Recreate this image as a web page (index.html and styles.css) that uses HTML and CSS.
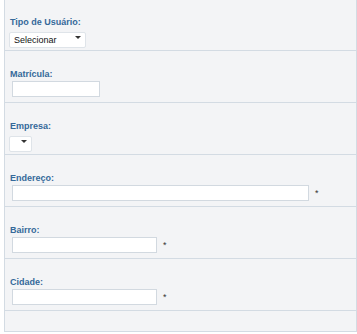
FILE: index.html
```html
<!DOCTYPE html>
<html lang="pt-BR">
<head>
    <meta charset="UTF-8">
    <meta name="viewport" content="width=device-width, initial-scale=1.0">
    <title>Cadastro de usuário</title>
    <link rel="stylesheet" href="styles.css">
</head>
<body>

    <form class="form-box">
        <div class="form-row first">
            <label for="tipo">Tipo de Usuário:</label>
            <span class="select-wrap tipo">
                <select id="tipo" name="tipo">
                    <option>Selecionar</option>
                </select>
            </span>
        </div>
        <div class="form-row">
            <label for="matricula">Matrícula:</label>
            <input type="text" id="matricula" name="matricula" class="w-matricula">
        </div>
        <div class="form-row">
            <label for="empresa">Empresa:</label>
            <span class="select-wrap empresa">
                <select id="empresa" name="empresa">
                    <option></option>
                </select>
            </span>
        </div>
        <div class="form-row">
            <label for="endereco">Endereço:</label>
            <input type="text" id="endereco" name="endereco" class="w-endereco"><span class="req">*</span>
        </div>
        <div class="form-row">
            <label for="bairro">Bairro:</label>
            <input type="text" id="bairro" name="bairro" class="w-curto"><span class="req">*</span>
        </div>
        <div class="form-row">
            <label for="cidade">Cidade:</label>
            <input type="text" id="cidade" name="cidade" class="w-curto"><span class="req">*</span>
        </div>
        <div class="form-row empty"></div>
    </form>

</body>
</html>
```

FILE: styles.css
```css
body {
    margin: 0;
    background-color: #ffffff;
    font-family: "Liberation Sans", Arial, sans-serif;
}
.form-box {
    margin: 0 0 0 4px;
    border-left: 1px solid #d3dbe3;
    border-right: 1px solid #d3dbe3;
    background-color: #f3f4f6;
}
.form-row {
    padding: 17px 0 5px 5px;
    border-bottom: 1px solid #d3dbe3;
    display: flex;
    flex-wrap: wrap;
    align-items: center;
}
.form-row.first {
    padding-top: 16px;
}
.form-row.empty {
    padding: 0;
    height: 20px;
}
label {
    display: block;
    width: 100%;
    height: 13px;
    line-height: 13px;
    font-size: 9px;
    font-weight: bold;
    color: #35699a;
}
input {
    box-sizing: border-box;
    height: 16px;
    margin: 0 0 0 2px;
    padding: 0 3px;
    border: 1px solid #d2d9e0;
    background-color: #ffffff;
    font-size: 9px;
}
.w-matricula {
    width: 88px;
}
.w-endereco {
    width: 297px;
}
.w-curto {
    width: 145px;
}
.req {
    margin-left: 6px;
    font-size: 9px;
    color: #333333;
    line-height: 16px;
}
.select-wrap {
    position: relative;
    display: block;
    height: 16px;
    margin-left: -1px;
}
.select-wrap select {
    -webkit-appearance: none;
    appearance: none;
    box-sizing: border-box;
    width: 100%;
    height: 16px;
    margin: 0;
    padding: 0 0 0 4px;
    border: 1px solid #dfe4e9;
    border-radius: 2px;
    background-color: #ffffff;
    font-family: "Liberation Sans", Arial, sans-serif;
    font-size: 9px;
    color: #111111;
}
.select-wrap::after {
    content: "";
    position: absolute;
    top: 7px;
    right: 5px;
    border-left: 3px solid transparent;
    border-right: 3px solid transparent;
    border-top: 3px solid #333333;
    pointer-events: none;
}
.select-wrap.tipo {
    width: 77px;
}
.select-wrap.empresa {
    width: 23px;
}
```
